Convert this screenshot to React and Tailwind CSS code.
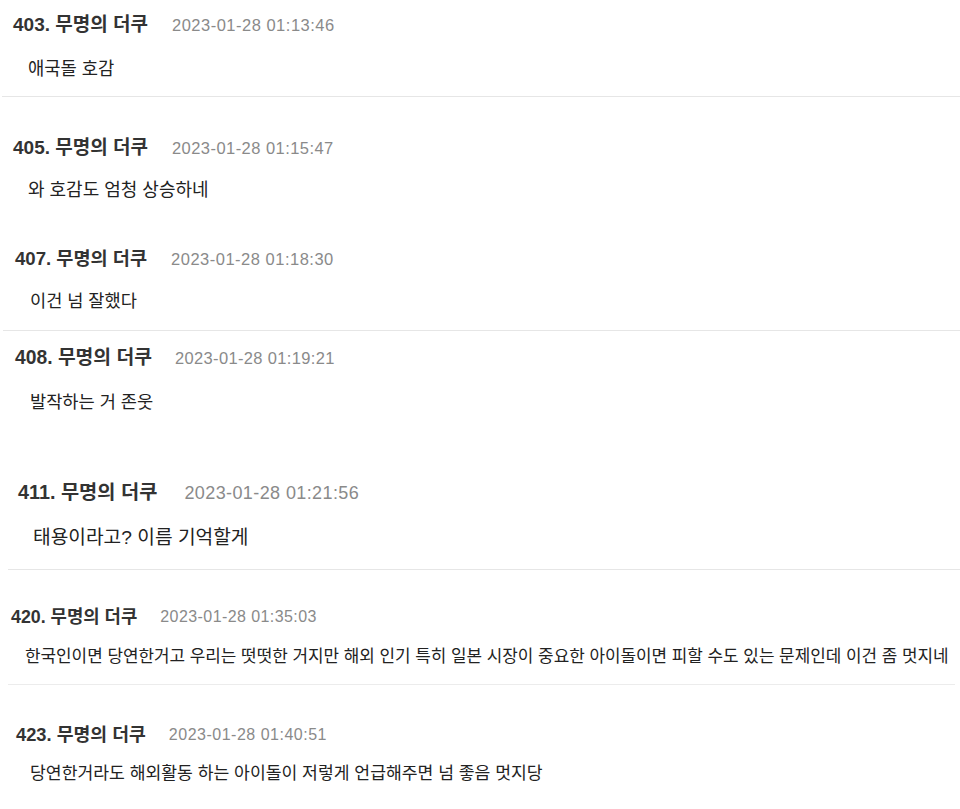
const FONT = "font-['Liberation_Sans','Noto_Sans_CJK_KR',sans-serif]";

function Comment({ top, headerPad, num, ts, tsGap, numCls, tsCls, bodyGap, bodyPad, bodyCls, body }) {
  return (
    <div className={top}>
      <div className={`flex items-center h-6 whitespace-nowrap ${headerPad}`}>
        <span className={`font-bold text-[#333] ${numCls}`}>{num}. 무명의 더쿠</span>
        <span className={`text-[#8a8a8a] ${tsGap} ${tsCls}`}>{ts}</span>
      </div>
      <div className={`flex items-center h-6 whitespace-nowrap ${bodyGap} ${bodyPad}`}>
        <span className={`text-[#222] ${bodyCls}`}>{body}</span>
      </div>
    </div>
  );
}

export default function App() {
  return (
    <div className={`w-[960px] h-[809px] bg-white overflow-hidden ${FONT}`}>
      {/* block A */}
      <div className="h-[96px]">
        <Comment
          top="pt-[13px]"
          headerPad="pl-[13px]"
          num="403"
          numCls="text-[19px]"
          ts="2023-01-28 01:13:46"
          tsGap="ml-[24px]"
          tsCls="text-[16.5px] tracking-[0.5px]"
          bodyGap="mt-[20px]"
          bodyPad="pl-[28px]"
          bodyCls="text-[17.7px]"
          body="애국돌 호감"
        />
      </div>
      <div className="ml-[2px] h-px bg-[#e6e6e6]" />

      {/* block B */}
      <div className="h-[233px]">
        <Comment
          top="pt-[39px]"
          headerPad="pl-[13px]"
          num="405"
          numCls="text-[19px]"
          ts="2023-01-28 01:15:47"
          tsGap="ml-[24px]"
          tsCls="text-[16.5px] tracking-[0.45px]"
          bodyGap="mt-[18px]"
          bodyPad="pl-[28px]"
          bodyCls="text-[18px]"
          body="와 호감도 엄청 상승하네"
        />
        <Comment
          top="pt-[45px]"
          headerPad="pl-[15px]"
          num="407"
          numCls="text-[18.6px]"
          ts="2023-01-28 01:18:30"
          tsGap="ml-[24px]"
          tsCls="text-[16.5px] tracking-[0.5px]"
          bodyGap="mt-[18px]"
          bodyPad="pl-[30px]"
          bodyCls="text-[17.6px]"
          body="이건 넘 잘했다"
        />
      </div>
      <div className="ml-[3px] h-px bg-[#e6e6e6]" />

      {/* block C */}
      <div className="h-[238px]">
        <Comment
          top="pt-[15px]"
          headerPad="pl-[15px]"
          num="408"
          numCls="text-[19.3px]"
          ts="2023-01-28 01:19:21"
          tsGap="ml-[23px]"
          tsCls="text-[16.5px] tracking-[0.35px]"
          bodyGap="mt-[20px]"
          bodyPad="pl-[30px]"
          bodyCls="text-[17.6px]"
          body="발작하는 거 존웃"
        />
        <Comment
          top="pt-[67px]"
          headerPad="pl-[18px]"
          num="411"
          numCls="text-[19.8px]"
          ts="2023-01-28 01:21:56"
          tsGap="ml-[27px]"
          tsCls="text-[18px] tracking-[0.4px]"
          bodyGap="mt-[21px]"
          bodyPad="pl-[33px]"
          bodyCls="text-[19.2px]"
          body="태용이라고? 이름 기억할게"
        />
      </div>
      <div className="ml-[8px] h-px bg-[#e6e6e6]" />

      {/* block D */}
      <div className="h-[114px]">
        <Comment
          top="pt-[35px]"
          headerPad="pl-[11px]"
          num="420"
          numCls="text-[17.8px]"
          ts="2023-01-28 01:35:03"
          tsGap="ml-[23px]"
          tsCls="text-[16px] tracking-[0.42px]"
          bodyGap="mt-[16px]"
          bodyPad="pl-[25px]"
          bodyCls="text-[16.9px]"
          body="한국인이면 당연한거고 우리는 떳떳한 거지만 해외 인기 특히 일본 시장이 중요한 아이돌이면 피할 수도 있는 문제인데 이건 좀 멋지네"
        />
      </div>
      <div className="ml-[8px] mr-[5px] h-px bg-[#ececec]" />

      {/* block E */}
      <div>
        <Comment
          top="pt-[38px]"
          headerPad="pl-[16px]"
          num="423"
          numCls="text-[18.3px]"
          ts="2023-01-28 01:40:51"
          tsGap="ml-[23px]"
          tsCls="text-[16px] tracking-[0.5px]"
          bodyGap="mt-[15px]"
          bodyPad="pl-[30px]"
          bodyCls="text-[17.2px]"
          body="당연한거라도 해외활동 하는 아이돌이 저렇게 언급해주면 넘 좋음 멋지당"
        />
      </div>
    </div>
  );
}
